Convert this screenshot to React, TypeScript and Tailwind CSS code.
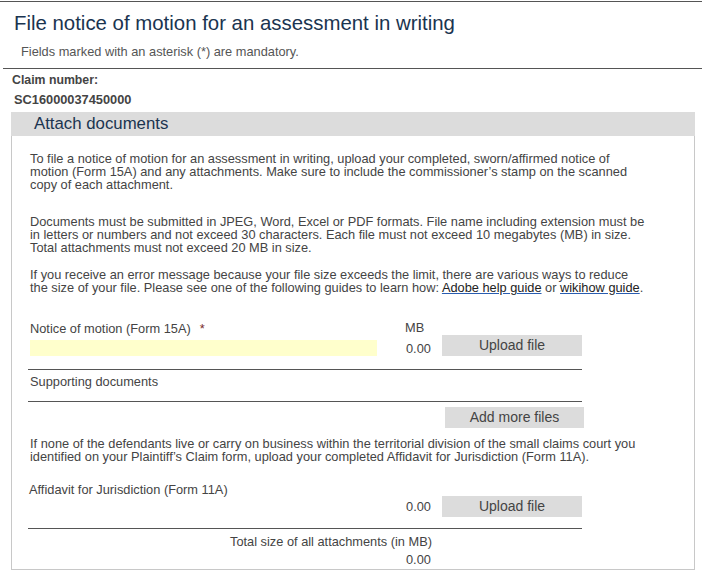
export default function App() {
  return (
    <div className="w-[702px] h-[574px] bg-white font-['Liberation_Sans',Arial,sans-serif] text-[#444] overflow-hidden">
      <div className="border-t border-[#555] mt-px" />

      {/* Page header */}
      <h1 className="pl-[14px] pt-[10px] text-[20.4px] leading-[23px] text-[#1a3450]">
        File notice of motion for an assessment in writing
      </h1>
      <p className="pl-[21px] pt-[10px] text-[12.8px] leading-[14px] text-[#555]">
        Fields marked with an asterisk (*) are mandatory.
      </p>
      <div className="mt-[9px] ml-[3px] border-t border-[#555]" />

      {/* Claim */}
      <div className="pl-[12px] pt-[4px] text-[12.3px] leading-[14px] font-bold text-[#444]">
        <div>Claim number:</div>
        <div className="pl-[2px] pt-[6px] text-[12.8px]">SC16000037450000</div>
      </div>

      {/* Attach documents panel */}
      <div className="ml-[11px] w-[684px] mt-[5px]">
        <div className="h-[24px] bg-[#dcdcdc] pl-[23px] text-[16.8px] leading-[24px] text-[#1a3450]">
          Attach documents
        </div>
        <div className="h-[434px] border border-t-0 border-[#c8c8c8] pl-[18px] pt-[16px] text-[12.8px] leading-[13px] text-[#444]">
          <p>
            To file a notice of motion for an assessment in writing, upload your completed, sworn/affirmed notice of
            <br />
            motion (Form 15A) and any attachments. Make sure to include the commissioner’s stamp on the scanned
            <br />
            copy of each attachment.
          </p>
          <p className="mt-[24px]">
            Documents must be submitted in JPEG, Word, Excel or PDF formats. File name including extension must be
            <br />
            in letters or numbers and not exceed 30 characters. Each file must not exceed 10 megabytes (MB) in size.
            <br />
            Total attachments must not exceed 20 MB in size.
          </p>
          <p className="mt-[14px]">
            If you receive an error message because your file size exceeds the limit, there are various ways to reduce
            <br />
            the size of your file. Please see one of the following guides to learn how:{' '}
            <a href="#" className="text-[#222] underline decoration-[#2a5db0]">Adobe help guide</a> or{' '}
            <a href="#" className="text-[#222] underline decoration-[#2a5db0]">wikihow guide</a>.
          </p>

          {/* Notice of motion */}
          <div className="w-[554px] ml-[-2px] mt-[27px]">
            <div className="flex items-end">
              <div className="w-[349px] pl-[2px]">
                <div className="leading-[14px]">
                  Notice of motion (Form 15A)<span className="ml-[9px] text-[#7a2a2a]">*</span>
                </div>
                <div className="mt-[4px] h-[16px] bg-[#ffffcc]" />
              </div>
              <div className="w-[65px] pl-[28px] leading-[14px]">
                <div>MB</div>
                <div className="mt-[7px] pl-[1px]">0.00</div>
              </div>
              <button className="w-[140px] h-[21px] bg-[#dcdcdc] text-[14px] text-[#444]">Upload file</button>
            </div>
            <div className="mt-[13px] border-t border-[#555]" />
            <div className="pl-[2px] pt-[5px] leading-[14px]">Supporting documents</div>
            <div className="mt-[12px] border-t border-[#555]" />
          </div>
          <div className="w-[556px] ml-[-2px] flex justify-end mt-[5px]">
            <button className="w-[139px] h-[21px] bg-[#dcdcdc] text-[14px] text-[#444]">Add more files</button>
          </div>

          {/* Affidavit */}
          <p className="mt-[9px]">
            If none of the defendants live or carry on business within the territorial division of the small claims court you
            <br />
            identified on your Plaintiff’s Claim form, upload your completed Affidavit for Jurisdiction (Form 11A).
          </p>
          <div className="w-[554px] ml-[-2px] mt-[20px]">
            <div className="pl-[1px] leading-[14px]">Affidavit for Jurisdiction (Form 11A)</div>
            <div className="flex items-center justify-end mt-[-1px]">
              <span className="mr-[11px]">0.00</span>
              <button className="w-[140px] h-[21px] bg-[#dcdcdc] text-[14px] text-[#444]">Upload file</button>
            </div>
            <div className="mt-[11px] border-t border-[#555]" />
            <div className="pl-[202px] pt-[6px] leading-[14px]">Total size of all attachments (in MB)</div>
            <div className="pl-[378px] pt-[4px] leading-[14px]">0.00</div>
          </div>
        </div>
      </div>
    </div>
  );
}
